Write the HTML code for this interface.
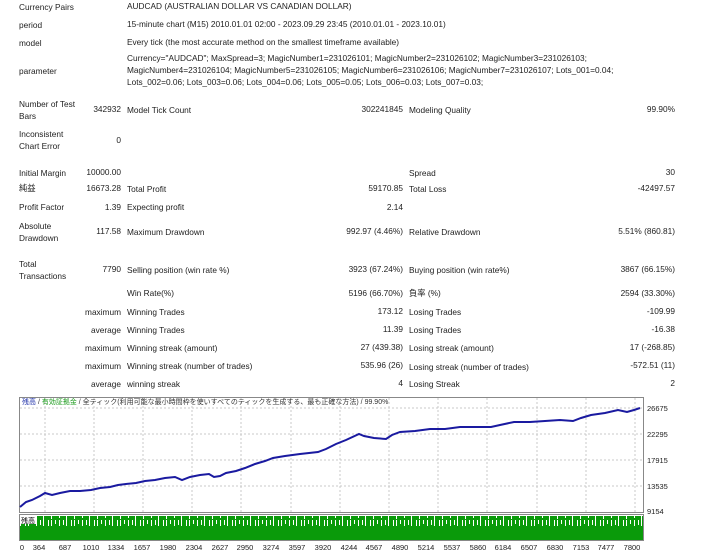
<!DOCTYPE html>
<html><head><meta charset="utf-8"><style>
body{margin:0;width:715px;height:554px;background:#fff;position:relative;overflow:hidden;font-family:Tahoma,"Liberation Sans","Noto Sans CJK JP",sans-serif;font-size:8.3px;color:#222}
.a{position:absolute;white-space:nowrap;line-height:11px}
.r{position:absolute;white-space:nowrap;line-height:11px;text-align:right}
</style></head><body>
<div class="a" style="left:19px;top:2px">Currency Pairs</div><div class="a" style="left:127px;top:1px">AUDCAD (AUSTRALIAN DOLLAR VS CANADIAN DOLLAR)</div>
<div class="a" style="left:19px;top:20px">period</div><div class="a" style="left:127px;top:19px">15-minute chart (M15) 2010.01.01 02:00 - 2023.09.29 23:45 (2010.01.01 - 2023.10.01)</div>
<div class="a" style="left:19px;top:38px">model</div><div class="a" style="left:127px;top:37px">Every tick (the most accurate method on the smallest timeframe available)</div>
<div class="a" style="left:19px;top:66px">parameter</div>
<div class="a" style="left:127px;top:53px">Currency="AUDCAD"; MaxSpread=3; MagicNumber1=231026101; MagicNumber2=231026102; MagicNumber3=231026103;</div>
<div class="a" style="left:127px;top:65px">MagicNumber4=231026104; MagicNumber5=231026105; MagicNumber6=231026106; MagicNumber7=231026107; Lots_001=0.04;</div>
<div class="a" style="left:127px;top:77px">Lots_002=0.06; Lots_003=0.06; Lots_004=0.06; Lots_005=0.05; Lots_006=0.03; Lots_007=0.03;</div>

<div class="a" style="left:19px;top:99px">Number of Test</div><div class="a" style="left:19px;top:111px">Bars</div>
<div class="r" style="right:594px;top:104px">342932</div><div class="a" style="left:127px;top:105px">Model Tick Count</div>
<div class="r" style="right:312px;top:104px">302241845</div><div class="a" style="left:409px;top:105px">Modeling Quality</div><div class="r" style="right:40px;top:104px">99.90%</div>

<div class="a" style="left:19px;top:129px">Inconsistent</div><div class="a" style="left:19px;top:141px">Chart Error</div><div class="r" style="right:594px;top:135px">0</div>

<div class="a" style="left:19px;top:168px">Initial Margin</div><div class="r" style="right:594px;top:167px">10000.00</div><div class="a" style="left:409px;top:168px">Spread</div><div class="r" style="right:40px;top:167px">30</div>
<div class="a" style="left:19px;top:183px">純益</div><div class="r" style="right:594px;top:183px">16673.28</div><div class="a" style="left:127px;top:184px">Total Profit</div><div class="r" style="right:312px;top:183px">59170.85</div><div class="a" style="left:409px;top:184px">Total Loss</div><div class="r" style="right:40px;top:183px">-42497.57</div>
<div class="a" style="left:19px;top:202px">Profit Factor</div><div class="r" style="right:594px;top:202px">1.39</div><div class="a" style="left:127px;top:202px">Expecting profit</div><div class="r" style="right:312px;top:202px">2.14</div>
<div class="a" style="left:19px;top:221px">Absolute</div><div class="a" style="left:19px;top:233px">Drawdown</div><div class="r" style="right:594px;top:226px">117.58</div><div class="a" style="left:127px;top:227px">Maximum Drawdown</div><div class="r" style="right:312px;top:226px">992.97 (4.46%)</div><div class="a" style="left:409px;top:227px">Relative Drawdown</div><div class="r" style="right:40px;top:226px">5.51% (860.81)</div>
<div class="a" style="left:19px;top:259px">Total</div><div class="a" style="left:19px;top:271px">Transactions</div><div class="r" style="right:594px;top:264px">7790</div><div class="a" style="left:127px;top:265px">Selling position (win rate %)</div><div class="r" style="right:312px;top:264px">3923 (67.24%)</div><div class="a" style="left:409px;top:265px">Buying position (win rate%)</div><div class="r" style="right:40px;top:264px">3867 (66.15%)</div>
<div class="a" style="left:127px;top:288px">Win Rate(%)</div><div class="r" style="right:312px;top:288px">5196 (66.70%)</div><div class="a" style="left:409px;top:288px">負率 (%)</div><div class="r" style="right:40px;top:288px">2594 (33.30%)</div>
<div class="r" style="right:594px;top:307px">maximum</div><div class="a" style="left:127px;top:307px">Winning Trades</div><div class="r" style="right:312px;top:306px">173.12</div><div class="a" style="left:409px;top:307px">Losing Trades</div><div class="r" style="right:40px;top:306px">-109.99</div>
<div class="r" style="right:594px;top:325px">average</div><div class="a" style="left:127px;top:325px">Winning Trades</div><div class="r" style="right:312px;top:324px">11.39</div><div class="a" style="left:409px;top:325px">Losing Trades</div><div class="r" style="right:40px;top:324px">-16.38</div>
<div class="r" style="right:594px;top:343px">maximum</div><div class="a" style="left:127px;top:343px">Winning streak (amount)</div><div class="r" style="right:312px;top:342px">27 (439.38)</div><div class="a" style="left:409px;top:343px">Losing streak (amount)</div><div class="r" style="right:40px;top:342px">17 (-268.85)</div>
<div class="r" style="right:594px;top:361px">maximum</div><div class="a" style="left:127px;top:361px">Winning streak (number of trades)</div><div class="r" style="right:312px;top:360px">535.96 (26)</div><div class="a" style="left:409px;top:362px">Losing streak (number of trades)</div><div class="r" style="right:40px;top:360px">-572.51 (11)</div>
<div class="r" style="right:594px;top:379px">average</div><div class="a" style="left:127px;top:379px">winning streak</div><div class="r" style="right:312px;top:378px">4</div><div class="a" style="left:409px;top:379px">Losing Streak</div><div class="r" style="right:40px;top:378px">2</div>

<svg style="position:absolute;left:0;top:390px" width="715" height="164">
<defs><pattern id="vb" width="23" height="10" patternUnits="userSpaceOnUse">
<rect width="23" height="10" fill="#0a9a0a"/><rect x="2" width="1" height="6" fill="#fff"/><rect x="5" width="1" height="9" fill="#fff"/><rect x="9" width="1" height="4" fill="#fff"/><rect x="13" width="1" height="8" fill="#fff"/><rect x="17" width="1" height="5" fill="#fff"/><rect x="20" width="1" height="10" fill="#fff"/></pattern></defs>
<rect x="19.5" y="7.5" width="624" height="115" fill="#fff" stroke="#888"/>
<g stroke="#c8c8c8" stroke-dasharray="2,2" stroke-width="1">
<line x1="20" x2="643" y1="18" y2="18"/><line x1="20" x2="643" y1="44" y2="44"/><line x1="20" x2="643" y1="70" y2="70"/><line x1="20" x2="643" y1="96" y2="96"/>
<line x1="45" x2="45" y1="8" y2="122"/><line x1="94" x2="94" y1="8" y2="122"/><line x1="143" x2="143" y1="8" y2="122"/><line x1="192" x2="192" y1="8" y2="122"/><line x1="241" x2="241" y1="8" y2="122"/><line x1="291" x2="291" y1="8" y2="122"/><line x1="340" x2="340" y1="8" y2="122"/><line x1="389" x2="389" y1="8" y2="122"/><line x1="438" x2="438" y1="8" y2="122"/><line x1="487" x2="487" y1="8" y2="122"/><line x1="537" x2="537" y1="8" y2="122"/><line x1="586" x2="586" y1="8" y2="122"/><line x1="635" x2="635" y1="8" y2="122"/>
</g>
<polyline fill="none" stroke="#1a1aa0" stroke-width="2" points="20,117 26,112 32,110 40,106 45,103 52,105 60,103 70,101 80,101 91,100 100,98 110,97 118,95 126,94 136,93 145,91 155,90 165,88 175,87 182,90 190,87 200,85 209,84 214,87 220,86 226,83 236,81 245,78 255,74 265,71 273,68 285,66 300,64 318,62 326,59 336,54 346,50 359,44 364,46 374,48 386,49 392,45 400,42 415,41 430,39 445,39 460,37 475,37 491,37 500,35 514,32 530,32 545,31 560,30 573,31 581,28 591,25 605,23 618,20 627,22 634,20 640,18"/>
<rect x="19.5" y="124.5" width="624" height="26" fill="#fff" stroke="#888"/>
<rect x="20" y="136" width="623" height="14" fill="#0a9a0a"/>
<rect x="20" y="126" width="623" height="10" fill="url(#vb)"/>
<rect x="21" y="126" width="16" height="8" fill="#fff"/><text x="21" y="133" font-size="7" fill="#000" font-family="Liberation Sans,Noto Sans CJK JP,sans-serif">残高</text>
<text x="22" y="14" font-size="7" font-family="Liberation Sans,Noto Sans CJK JP,sans-serif"><tspan fill="#2233aa">残高</tspan><tspan fill="#333"> / </tspan><tspan fill="#1a9a1a">有効証拠金</tspan><tspan fill="#333"> / 全ティック(利用可能な最小時間枠を使いすべてのティックを生成する、最も正確な方法) / 99.90%</tspan></text>
<g font-size="7.5" fill="#222" font-family="Liberation Sans,sans-serif">
<text x="647" y="21">26675</text><text x="647" y="47">22295</text><text x="647" y="73">17915</text><text x="647" y="99">13535</text><text x="647" y="124">9154</text>
</g>
<g font-size="7.5" fill="#222" font-family="Liberation Sans,sans-serif" text-anchor="middle">
<text x="22" y="160">0</text><text x="39" y="160">364</text><text x="65" y="160">687</text><text x="91" y="160">1010</text><text x="116" y="160">1334</text><text x="142" y="160">1657</text><text x="168" y="160">1980</text><text x="194" y="160">2304</text><text x="220" y="160">2627</text><text x="245" y="160">2950</text><text x="271" y="160">3274</text><text x="297" y="160">3597</text><text x="323" y="160">3920</text><text x="349" y="160">4244</text><text x="374" y="160">4567</text><text x="400" y="160">4890</text><text x="426" y="160">5214</text><text x="452" y="160">5537</text><text x="478" y="160">5860</text><text x="503" y="160">6184</text><text x="529" y="160">6507</text><text x="555" y="160">6830</text><text x="581" y="160">7153</text><text x="606" y="160">7477</text><text x="632" y="160">7800</text>
</g>
</svg>
</body></html>
